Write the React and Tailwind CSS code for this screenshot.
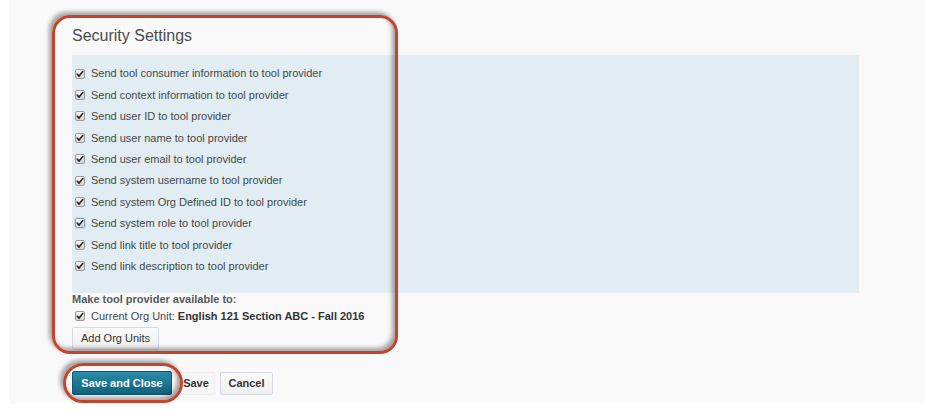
import React from 'react';

const options = [
    'Send tool consumer information to tool provider',
    'Send context information to tool provider',
    'Send user ID to tool provider',
    'Send user name to tool provider',
    'Send user email to tool provider',
    'Send system username to tool provider',
    'Send system Org Defined ID to tool provider',
    'Send system role to tool provider',
    'Send link title to tool provider',
    'Send link description to tool provider',
];

// small grey checked box like the old D2L checkboxes
const CheckBox = ({ focused }) => (
    <span
        className={`w-[10px] h-[10px] rounded-[2px] border flex items-center justify-center bg-gradient-to-b from-[#f6f6f6] to-[#d2d2d2] shrink-0 ${focused ? 'border-[#7d9fc4] outline outline-1 outline-[#c6d6ea]' : 'border-[#9a9a9a]'}`}
    >
        <svg width="8" height="8" viewBox="0 0 8 8">
            <path d="M1.3 4.2 L3.1 6.1 L6.8 1.6" fill="none" stroke="#222" strokeWidth="1.6" strokeLinecap="round" strokeLinejoin="round" />
        </svg>
    </span>
);

const App = () => {
    return (
        <div className="relative w-[925px] h-[419px] bg-white overflow-hidden font-['Liberation_Sans',Arial,sans-serif]">
            <div className="ml-[9px] h-[403px] bg-[#f9f9f9] pl-[63px] pt-[26px]">
                <h2 className="h-[20px] leading-[20px] text-[16px] text-[#494c4e] font-normal">Security Settings</h2>

                {/* options panel */}
                <div className="mt-[9px] w-[787px] h-[238px] bg-[#e1edf2] pt-[8px]">
                    {options.map((label, i) => (
                        <div key={label} className="h-[21.4px] flex items-center gap-[6px] pl-[3px] text-[11px] text-[#454849]">
                            <CheckBox focused={i === 7} />
                            <span>{label}</span>
                        </div>
                    ))}
                </div>

                <div className="h-[13px] leading-[13px] text-[11px] font-bold text-[#565a5c]">Make tool provider available to:</div>
                <div className="mt-[3px] h-[14px] flex items-center gap-[6px] pl-[3px] text-[11px] text-[#454849]">
                    <CheckBox />
                    <span>
                        Current Org Unit: <span className="font-bold text-[#333]">English 121 Section ABC - Fall 2016</span>
                    </span>
                </div>
                <button className="mt-[4px] h-[23px] w-[87px] text-[11px] text-[#333] bg-gradient-to-b from-[#fafafa] to-[#f0f0f0] border border-[#d3d9e3] rounded-[2px]">
                    Add Org Units
                </button>

                {/* action buttons */}
                <div className="mt-[21px] flex items-center gap-[5px]">
                    <button className="h-[24px] w-[100px] text-[11px] font-bold text-white bg-gradient-to-b from-[#2a8cab] to-[#10627c] border border-[#0d5870] rounded-[2px]">
                        Save and Close
                    </button>
                    <button className="h-[23px] w-[38px] text-[11px] font-bold text-[#333] bg-[#f7f7f7] border border-[#eeeeee] rounded-[2px]">
                        Save
                    </button>
                    <button className="h-[23px] w-[53px] text-[11px] font-bold text-[#333] bg-gradient-to-b from-[#fafafa] to-[#f0f0f0] border border-[#d3d9e3] rounded-[2px]">
                        Cancel
                    </button>
                </div>
            </div>

            {/* red annotation outlines drawn over the page */}
            <div className="absolute left-[52px] top-[15px] w-[346px] h-[339px] rounded-[18px] border-[3px] border-[#c2452e] shadow-[-3px_-3px_4px_rgba(0,0,0,0.35),inset_-3px_-3px_4px_rgba(0,0,0,0.35)] pointer-events-none" />
            <div className="absolute left-[63px] top-[363px] w-[120px] h-[40px] rounded-full border-[3px] border-[#c2452e] shadow-[-3px_-3px_4px_rgba(0,0,0,0.35),inset_-3px_-3px_4px_rgba(0,0,0,0.35)] pointer-events-none" />
        </div>
    );
};

export default App;
